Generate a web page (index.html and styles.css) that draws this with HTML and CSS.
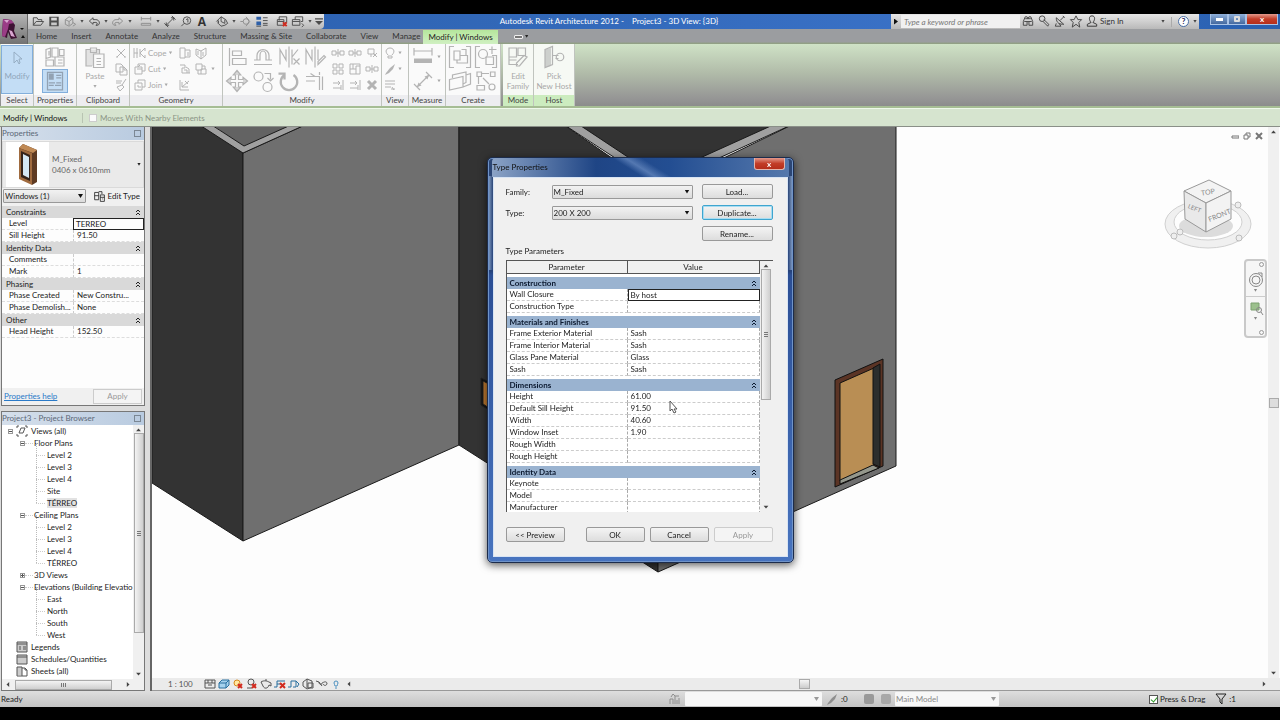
FILE: index.html
```html
<!DOCTYPE html>
<html lang="en">
<head>
<meta charset="utf-8">
<title>Autodesk Revit Architecture 2012 - Project3 - 3D View: {3D}</title>
<link rel="stylesheet" href="styles.css">
</head>
<body>
<svg class="defs" aria-hidden="true">
  <symbol id="open" viewBox="0 0 16 16"><path d="M3 12V4h4l1 2h4v2M3 12l3-4h8l-3 4z"/></symbol>
  <symbol id="save" viewBox="0 0 16 16"><path class="f" fill-rule="evenodd" d="M3 3h10v10H3zM5 4v3h6V4zM5 9v3h6V9z"/></symbol>
  <symbol id="sync" viewBox="0 0 16 16"><path d="M3 6l4-3 4 2v5l-4 3-4-2zM3 6l4 2 4-3M7 8v4M11 9l3 2-3 2"/></symbol>
  <symbol id="undo" viewBox="0 0 16 16"><path d="M7 4L3 7.500l4 3.500V9h3c2 0 2 3 0 3h2c3-1 2-6-2-6H7z"/></symbol>
  <symbol id="redo" viewBox="0 0 16 16"><path d="M9 4l4 3.500L9 11V9H6c-2 0-2 3 0 3H4C1 11 2 6 6 6h3z"/></symbol>
  <symbol id="ruler" viewBox="0 0 16 16"><path d="M3 3v4M13 3v4M3 5h10M3 10h10v2H3z"/></symbol>
  <symbol id="dim" viewBox="0 0 16 16"><path d="M4 12l8-8M2 10l4 4M10 2l4 4M9 4h3v3M4 9v3h3"/></symbol>
  <symbol id="tag" viewBox="0 0 16 16"><circle cx="9" cy="7" r="4"/><path d="M6 10l-3 3M8 6l2-1v4"/></symbol>
  <symbol id="house" viewBox="0 0 16 16"><path d="M2 8l5-5 5 3 2 4-3 2-4 1-3-3V7M7 3v5l4 2V6M4 10V7"/></symbol>
  <symbol id="section" viewBox="0 0 16 16"><circle cx="8" cy="8" r="3"/><path d="M8 3l4 5-4 5M2 8h3"/></symbol>
  <symbol id="lines" viewBox="0 0 16 16"><path class="blue" d="M2 3h5v3H2zM2 8h5v4H2z"/><path d="M9 4h5M9 7h5M9 10h5M9 12h5M2 13h5"/></symbol>
  <symbol id="closehid" viewBox="0 0 16 16"><path d="M5 7V3h8v6h-2M3 6h7v6H3zM3 8h7"/><path class="red" d="M9 9l4 4M13 9l-4 4"/></symbol>
  <symbol id="switch" viewBox="0 0 16 16"><path d="M5 6V3h8v5h-2M2 6h8v6H2zM2 8h8M12 10l2 2-2 2"/></symbol>
  <symbol id="arrow" viewBox="0 0 16 16"><path d="M5 2v11l3-3 2 4 1-1-1-4h3z"/></symbol>
  <symbol id="props" viewBox="0 0 16 16"><path d="M2 3l3-1v6l-3 1zM6 2h4v6H6zM8 8h6v6H8zM2 10h5v4H2zM11 3h3v4h-3zM10 10h3M10 12h3M4 4v3"/></symbol>
  <symbol id="palette" viewBox="0 0 16 16"><path d="M2 1h12v14H2z"/><path class="f" d="M3 2h4v5H3zM9 3h4v1H9zM9 5h4v1H9zM3 9h5v1H3zM9 9h4v1H9zM3 11h4v1H3zM8 11h5v1H8z"/></symbol>
  <symbol id="paste" viewBox="0 0 16 16"><path d="M5 3H2v11h4M11 6V3H9M5 2h4v3H5zM7 6h7v9H7zM9 9h3M9 11h3M9 13h3"/><path class="f" opacity=".35" d="M2 3h9v3H7v8H2z"/></symbol>
  <symbol id="x" viewBox="0 0 16 16"><path d="M4 4l8 8M12 4l-8 8M3 12h2M11 12h2"/></symbol>
  <symbol id="copy" viewBox="0 0 16 16"><path d="M3 3h5l2 2v6H3zM7 6h4l3 3v5H7zM11 6v3h3"/></symbol>
  <symbol id="brush" viewBox="0 0 16 16"><path d="M13 2L9 8M3 4h6M3 6h5M4 10l5-2 2 2-4 4z"/></symbol>
  <symbol id="cope" viewBox="0 0 16 16"><path d="M2 3v10M5 3v10M2 8h4M13 3l-5 5 5 5M13 3v3M13 10v3M8 4v8"/></symbol>
  <symbol id="cut" viewBox="0 0 16 16"><path d="M6 6V3h7v7h-3M3 6h7v7H3zM5 8h5M6 6l2-2"/></symbol>
  <symbol id="join" viewBox="0 0 16 16"><path d="M6 6V3h7v7h-3v3H3V6zM6 6h4v4M6 8v2h3"/></symbol>
  <symbol id="wall" viewBox="0 0 16 16"><path d="M3 3h5v10H3zM8 5h5v7H8M10 8h2M10 10h2"/></symbol>
  <symbol id="cube" viewBox="0 0 16 16"><path d="M3 4l5 2 5-3v7l-5 4-5-4zM8 6v8M10 7v4M5 6v4"/></symbol>
  <symbol id="beam" viewBox="0 0 16 16"><path d="M3 4h5v3H5v5h8M9 6l3 2v4M7 9h3v3"/></symbol>
  <symbol id="split" viewBox="0 0 16 16"><path d="M3 3h6v6H3zM8 8h5v5H8zM5 9v4h3M9 5h3v3"/></symbol>
  <symbol id="demolish" viewBox="0 0 16 16"><path d="M3 3v10h9M5 10l7-6M5 5v5h6M8 4l3 3"/></symbol>
  <symbol id="align" viewBox="0 0 16 16"><path d="M3 2v12M5 4h6v3H5zM5 9h9v4H5z"/></symbol>
  <symbol id="offset" viewBox="0 0 16 16"><path d="M2 10h4V7a2 3 0 1 1 4 0v3h4M2 13h12M4 10V7a4 4 0 0 1 8 0v3"/></symbol>
  <symbol id="mirror" viewBox="0 0 16 16"><path d="M8 1v14M2 13V3l4 7V3M10 3v10M10 8l4-5M11 9l4 4M11 13l4-4"/></symbol>
  <symbol id="mirror2" viewBox="0 0 16 16"><path d="M8 1v14M2 13V3l4 7V3M10 3v7M10 13l5-5-1-1-4 4z"/></symbol>
  <symbol id="move" viewBox="0 0 16 16"><path d="M8 1l2.500 3H9v3h3V5.500L15 8l-3 2.500V9H9v3h1.500L8 15l-2.500-3H7V9H4v1.500L1 8l3-2.500V7h3V4H5.500z"/><path class="f" opacity=".5" d="M8 1l2.500 3h-5zM15 8l-3 2.500v-5zM8 15l-2.500-3h5zM1 8l3-2.500v5z"/></symbol>
  <symbol id="copies" viewBox="0 0 16 16"><circle cx="5" cy="5" r="3"/><circle cx="11" cy="12" r="3"/><path d="M9 3h4v4M11 6l2 2 2-2"/></symbol>
  <symbol id="rotate" viewBox="0 0 16 16"><path stroke-width="1.500" d="M5 4a5.500 5.500 0 1 0 6 0M5 7V3H1"/></symbol>
  <symbol id="trim" viewBox="0 0 16 16"><path d="M2 5h9v9M2 8h6M11 2v2M13 5v9M5 3l3 2"/></symbol>
  <symbol id="splitel" viewBox="0 0 16 16"><path d="M2 6h4v4H2zM10 6h4v4h-4zM8 4v8M6 8h4"/></symbol>
  <symbol id="pin" viewBox="0 0 16 16"><path d="M4 4h6v5H4zM7 9v3M9 8l4 4M13 8l-4 4"/></symbol>
  <symbol id="array" viewBox="0 0 16 16"><path d="M3 3h4v4H3zM9 3h4v4H9zM3 9h4v4H3zM9 9h4v4H9z"/></symbol>
  <symbol id="scale" viewBox="0 0 16 16"><path d="M3 3h10v10H3zM3 8h6v5M6 3v5M9 8V5h4"/></symbol>
  <symbol id="extend" viewBox="0 0 16 16"><path d="M13 3v10M3 6h7M8 4l2 2-2 2M3 11h8M11 8v5"/></symbol>
  <symbol id="del" viewBox="0 0 16 16"><path stroke-width="3" d="M4 4l8 8M12 4l-8 8"/></symbol>
  <symbol id="bulb" viewBox="0 0 16 16"><path d="M6 11h4v2H6zM6 10C2 6 5 3 8 3s6 3 2 7"/></symbol>
  <symbol id="paint" viewBox="0 0 16 16"><path class="f" d="M13 3l-5 4-4 5-1 2 4-2 4-4z"/></symbol>
  <symbol id="weights" viewBox="0 0 16 16"><path d="M3 4h10M3 7h10M3 10h6M9 12h4M10 10l2 3"/></symbol>
  <symbol id="measure" viewBox="0 0 16 16"><path d="M2 2v5M14 2v5M2 4h12"/><path class="f" d="M2 9h12v3H2z"/></symbol>
  <symbol id="aligned" viewBox="0 0 16 16"><path d="M4 12l8-8M2 10l4 4M10 2l4 4"/><path class="f" d="M12 4l-1 3-2-2zM4 12l1-3 2 2z"/></symbol>
  <symbol id="group" viewBox="0 0 16 16"><path d="M4 1H1v14h3M12 1h3v14h-3M4 4h4v6H4zM8 7h5v5H6v-2M9 3h3v4"/></symbol>
  <symbol id="similar" viewBox="0 0 16 16"><path d="M4 1H1v14h3M12 7h3v8h-3M8 8h5v5H8zM12 1v5M10 3h5"/><circle cx="6" cy="6" r="3"/></symbol>
  <symbol id="assembly" viewBox="0 0 16 16"><path d="M1 7l9-2v7l-9 2zM3 6V4l9-2v7l-2 1M12 4l3-1v7l-5 2"/></symbol>
  <symbol id="parts" viewBox="0 0 16 16"><path d="M2 2h3v3H2zM11 2h3v3h-3zM2 11h5v3H2zM5 3h5M3 5v5M6 6l4 4"/><circle cx="12" cy="12" r="2"/></symbol>
  <symbol id="edit" viewBox="0 0 16 16"><path d="M2 2h5v6H2zM8 2h5v5H8zM2 10h5M2 8v5h6M14 8l-5 6H7v-2l5-5z"/></symbol>
  <symbol id="host" viewBox="0 0 16 16"><path d="M2 3l5-2v12l-5 2zM7 7h4M9 9h2"/><path class="f" opacity=".6" d="M2 3l4-1v12l-4 1z"/><circle cx="12" cy="8" r="2.500"/></symbol>
  <symbol id="binoc" viewBox="0 0 16 16"><path d="M3 12V8l2-5h2l1 2 1-2h2l2 5v4h-4V8H7v4zM4 8h3M9 8h3M5 5h6"/></symbol>
  <symbol id="key" viewBox="0 0 16 16"><circle cx="6" cy="5" r="3"/><path d="M7 8l5 5 1-2-5-5"/></symbol>
  <symbol id="dish" viewBox="0 0 16 16"><path d="M4 4c0 6 4 7 8 7zM8 7l4-4M4 10l-1 3h6l-2-3M11 2l2 2"/></symbol>
  <symbol id="star" viewBox="0 0 16 16"><path d="M8 2l2 4h4l-3 3 1 5-4-3-4 3 1-5-3-3h4z"/></symbol>
  <symbol id="user" viewBox="0 0 16 16"><path d="M8 2c4 0 3 5 1 7l4 2v2H3v-2l4-2C5 7 4 2 8 2z"/></symbol>
  <symbol id="chev" viewBox="0 0 8 8"><path d="M2 4l2-2 2 2M2 7l2-2 2 2"/></symbol>
  <symbol id="filter" viewBox="0 0 16 16"><path d="M3 3h10L9 8v5l-2-2V8z"/></symbol>
</svg>

<div class="app">
<header class="top">
  <button class="logo" aria-label="Application menu">
    <svg viewBox="0 0 27 27"><path fill="#3e1233" d="M3 3l8 1 4 5-1 6 3 7-6 1-3-7-1 6-5-2z"/><path fill="#9a3c86" d="M3 3l8 1 3 3-5 1-1 5-3 8-3-1z"/><path fill="#d9a6d0" d="M4 4l5 0-2 3zM9 14l3 1 3 6-4-1z"/><path fill="#111" d="M20 12h4l-2 2zM21 22l2-3 2 3z"/></svg>
  </button>
  <div class="titlebar">
    <div class="qat">
      <button aria-label="Open"><svg><use href="#open"/></svg></button>
      <button aria-label="Save"><svg><use href="#save"/></svg></button>
      <button class="dim" aria-label="Synchronize"><svg><use href="#sync"/></svg></button><i class="dd"></i>
      <button aria-label="Undo"><svg><use href="#undo"/></svg></button><i class="dd"></i>
      <button class="dim" aria-label="Redo"><svg><use href="#redo"/></svg></button><i class="dd"></i>
      <b class="gap"></b>
      <button class="dim" aria-label="Measure"><svg><use href="#ruler"/></svg></button><i class="dd"></i>
      <button aria-label="Dimension"><svg><use href="#dim"/></svg></button>
      <button aria-label="Tag"><svg><use href="#tag"/></svg></button>
      <button class="letter">A</button>
      <b class="gap"></b>
      <button aria-label="3D view"><svg><use href="#house"/></svg></button><i class="dd"></i>
      <button class="dim" aria-label="Section"><svg><use href="#section"/></svg></button>
      <button aria-label="Thin lines"><svg><use href="#lines"/></svg></button>
      <b class="gap"></b>
      <button aria-label="Close hidden windows"><svg><use href="#closehid"/></svg></button>
      <button aria-label="Switch windows"><svg><use href="#switch"/></svg></button><i class="dd"></i>
      <i class="dd big"></i>
    </div>
    <div class="title"><span>Autodesk Revit Architecture 2012 -</span><span>Project3 - 3D View: {3D}</span></div>
    <div class="info">
      <i class="play"></i>
      <input type="text" placeholder="Type a keyword or phrase" aria-label="Search">
      <button aria-label="Search"><svg><use href="#binoc"/></svg></button>
      <button aria-label="Subscription"><svg><use href="#key"/></svg></button>
      <button aria-label="Communication"><svg><use href="#dish"/></svg></button>
      <button aria-label="Favorites"><svg><use href="#star"/></svg></button>
      <button class="sign"><svg><use href="#user"/></svg>Sign In</button>
      <i class="dd push"></i><b class="rule"></b>
      <button class="help" aria-label="Help">?</button><i class="dd"></i>
    </div>
    <div class="winbtns">
      <button aria-label="Minimize"><i class="min"></i></button><button aria-label="Restore"><i class="max"></i></button><button class="close">x</button>
    </div>
  </div>
  <nav class="tabs">
    <button>Home</button><button>Insert</button><button>Annotate</button><button>Analyze</button><button>Structure</button><button>Massing &amp; Site</button><button>Collaborate</button><button>View</button><button>Manage</button><button class="active">Modify | Windows</button>
    <button class="mini" aria-label="Minimize ribbon"><i></i></button><i class="dd"></i>
  </nav>
</header>

<div class="ribbon">
  <section class="p-select"><div><button class="tall on"><svg><use href="#arrow"/></svg>Modify</button></div><h2>Select</h2></section>
  <section class="p-props"><div class="stack"><button aria-label="Type properties"><svg class="l"><use href="#props"/></svg></button><button class="on" aria-label="Properties"><svg class="m"><use href="#palette"/></svg></button></div><h2>Properties</h2></section>
  <section class="p-clip"><div><button class="tall"><svg class="l"><use href="#paste"/></svg>Paste<i class="dd"></i></button><span class="col"><button aria-label="Cut"><svg><use href="#x"/></svg></button><button aria-label="Copy"><svg><use href="#copy"/></svg></button><button aria-label="Match"><svg><use href="#brush"/></svg></button></span></div><h2>Clipboard</h2></section>
  <section class="p-geo"><div><span class="col wide"><button><svg><use href="#cope"/></svg>Cope<i class="dd"></i></button><button><svg><use href="#cut"/></svg>Cut<i class="dd"></i></button><button><svg><use href="#join"/></svg>Join<i class="dd"></i></button></span><span class="col"><button aria-label="Wall joins"><svg><use href="#wall"/></svg></button><button aria-label="Beam joins"><svg><use href="#beam"/></svg></button><button aria-label="Demolish"><svg><use href="#demolish"/></svg></button></span><span class="col"><button aria-label="Split face"><svg><use href="#cube"/></svg></button><button aria-label="Paint"><svg><use href="#split"/></svg><i class="dd"></i></button></span></div><h2>Geometry</h2></section>
  <section class="p-mod"><div>
    <span class="big"><button aria-label="Align"><svg class="l"><use href="#align"/></svg></button><button aria-label="Offset"><svg class="l"><use href="#offset"/></svg></button><button aria-label="Mirror axis"><svg class="l"><use href="#mirror"/></svg></button><button aria-label="Mirror draw"><svg class="l"><use href="#mirror2"/></svg></button><button aria-label="Move"><svg class="l"><use href="#move"/></svg></button><button aria-label="Copy"><svg class="l"><use href="#copies"/></svg></button><button aria-label="Rotate"><svg class="l"><use href="#rotate"/></svg></button><button aria-label="Trim"><svg class="l"><use href="#trim"/></svg></button></span>
    <span class="small"><button aria-label="Split"><svg><use href="#splitel"/></svg></button><button aria-label="Split gap"><svg><use href="#splitel"/></svg></button><button aria-label="Unpin"><svg><use href="#pin"/></svg></button><button aria-label="Array"><svg><use href="#array"/></svg></button><button aria-label="Scale"><svg><use href="#scale"/></svg></button><button aria-label="Pin"><svg><use href="#splitel"/></svg></button><button aria-label="Trim one"><svg><use href="#extend"/></svg></button><button aria-label="Trim many"><svg><use href="#extend"/></svg></button><button aria-label="Delete"><svg><use href="#del"/></svg></button></span></div><h2>Modify</h2></section>
  <section class="p-view"><div><span class="col"><button aria-label="Hide"><svg><use href="#bulb"/></svg><i class="dd"></i></button><button aria-label="Override"><svg><use href="#paint"/></svg><i class="dd"></i></button><button aria-label="Linework"><svg><use href="#weights"/></svg></button></span></div><h2>View</h2></section>
  <section class="p-meas"><div class="stack"><button aria-label="Measure"><svg class="l"><use href="#measure"/></svg><i class="dd"></i></button><button aria-label="Aligned dimension"><svg class="l"><use href="#aligned"/></svg><i class="dd"></i></button></div><h2>Measure</h2></section>
  <section class="p-create"><div><span class="big"><button aria-label="Create assembly"><svg class="l"><use href="#group"/></svg></button><button aria-label="Create parts"><svg class="l"><use href="#similar"/></svg></button><button aria-label="Create group"><svg class="l"><use href="#assembly"/></svg></button><button aria-label="Create similar"><svg class="l"><use href="#parts"/></svg></button></span></div><h2>Create</h2></section>
  <section class="p-mode green"><div><button class="tall"><svg class="l"><use href="#edit"/></svg>Edit<br>Family</button></div><h2>Mode</h2></section>
  <section class="p-host green"><div><button class="tall"><svg class="l"><use href="#host"/></svg>Pick<br>New Host</button></div><h2>Host</h2></section>
</div>

<div class="options"><strong>Modify | Windows</strong><label><input type="checkbox" disabled>Moves With Nearby Elements</label></div>

<main class="work">
  <aside class="side">
    <section class="palette">
      <h2 class="bar">Properties<button aria-label="Close properties"></button></h2>
      <div class="type">
        <svg viewBox="0 0 43 45"><path fill="#fff" d="M0 0h43v45H0z"/><path fill="#5e3a22" d="M13 6l4-4 14 6v32l-5 3z"/><path fill="#c08a55" d="M13 6l4-4 14 6-4 3z"/><path fill="#a06b3f" d="M13 6l13 5v32l-13-6z"/><path fill="#35231a" d="M15 9l9 4v26l-9-4z"/><path fill="#d5e8f5" d="M17 12l6 3v21l-6-3z"/></svg>
        <p>M_Fixed<br>0406 x 0610mm</p><i class="dd"></i>
      </div>
      <div class="filterrow"><span class="select"><select aria-label="Category"><option>Windows (1)</option></select></span><button><svg viewBox="0 0 16 16"><path d="M2 3h5v9H2zM2 7h5M7 2h4v3M9 6h5v8H9zM9 9h5M11 11h1"/></svg>Edit Type</button></div>
      <table class="grid">
        <tr><th colspan="2">Constraints<svg class="c"><use href="#chev"/></svg></th></tr>
        <tr><td>Level</td><td class="sel">TERREO</td></tr>
        <tr><td>Sill Height</td><td>91.50</td></tr>
        <tr><th colspan="2">Identity Data<svg class="c"><use href="#chev"/></svg></th></tr>
        <tr><td>Comments</td><td></td></tr>
        <tr><td>Mark</td><td>1</td></tr>
        <tr><th colspan="2">Phasing<svg class="c"><use href="#chev"/></svg></th></tr>
        <tr><td>Phase Created</td><td>New Constru...</td></tr>
        <tr><td>Phase Demolish...</td><td>None</td></tr>
        <tr><th colspan="2">Other<svg class="c"><use href="#chev"/></svg></th></tr>
        <tr><td>Head Height</td><td>152.50</td></tr>
      </table>
      <footer><a href="#help">Properties help</a><button disabled>Apply</button></footer>
    </section>
    <section class="browser">
      <h2 class="bar">Project3 - Project Browser<button aria-label="Close browser"></button></h2>
      <div class="treewrap">
        <ul class="tree">
          <li><i class="box"></i><svg class="ti" viewBox="0 0 12 12"><path d="M1 3V1h2M9 1h2v2M1 9v2h2M9 11h2V9M5 3h4l-2 5H3z"/></svg>Views (all)
            <ul>
              <li><i class="box"></i>Floor Plans<ul><li>Level 2</li><li>Level 3</li><li>Level 4</li><li>Site</li><li><mark>TÉRREO</mark></li></ul></li>
              <li><i class="box"></i>Ceiling Plans<ul><li>Level 2</li><li>Level 3</li><li>Level 4</li><li>TÉRREO</li></ul></li>
              <li><i class="box plus"></i>3D Views</li>
              <li><i class="box"></i>Elevations (Building Elevatio<ul><li>East</li><li>North</li><li>South</li><li>West</li></ul></li>
            </ul>
          </li>
          <li class="leaf"><svg class="ti" viewBox="0 0 12 12"><path class="g" d="M1 1h10v10H1z"/><path d="M1 1h10v10H1zM1 3h10M3 6h2M3 8h2M7 6h3M7 8h3"/></svg>Legends</li>
          <li class="leaf"><svg class="ti" viewBox="0 0 12 12"><path class="g" d="M1 2h10v9H1z"/><path d="M1 2h10v9H1zM1 4h10"/></svg>Schedules/Quantities</li>
          <li class="leaf"><svg class="ti" viewBox="0 0 12 12"><path class="g" d="M1 2h5v8H1z"/><path d="M1 2h5v9H1zM6 3h3l2 2v6H6M9 3v2h2"/></svg>Sheets (all)</li>
        </ul>
        <div class="vs"><i class="u"></i><b></b><i class="d"></i></div>
      </div>
      <div class="hs"><i class="lft"></i><b></b><i class="rgt"></i></div>
    </section>
  </aside>

  <section class="view">
    <div class="canvas">
      <svg class="scene" viewBox="152 127 1116 552" preserveAspectRatio="xMinYMin slice" role="img" aria-label="3D model">
        <g stroke="#1a1a1a">
          <path fill="#333" d="M152 120H195L243 153V541L152 483z"/>
          <path fill="#6f6f6f" d="M243 153L316 120H459V445L243 541z"/>
          <path fill="#636363" stroke="none" d="M205 120L244 147 304 120z"/>
          <path fill="#a0a0a0" d="M192 120L243 153 316 120H302L244 146 204 120z"/>
          <path fill="#333" d="M459 120H557L658 190V572L459 445z"/>
          <path fill="#6f6f6f" d="M658 190L802 120H896V466L658 572z"/>
          <path fill="#333" d="M572 120L658 178 784 120z"/>
          <path fill="#a0a0a0" d="M557 120L658 186 802 120H784L658 177 572 120z"/>
        </g>
        <path fill="#111" d="M481 378l8 4v28l-8-5z"/><path fill="#c07b32" d="M483 381l6 3v24l-6-4z"/>
        <path fill="#5b3425" stroke="#111" d="M835 380l48-21v107l-48 21z"/>
        <path fill="#b98e54" stroke="#111" d="M840 383l34-15v97l-34 16z"/>
        <path fill="#2c2e2d" stroke="#111" d="M873 368l7-4v103l-7-3z"/>
        <path fill="#94978c" stroke="#111" d="M840 480l33-15 6 3-39 16z"/>
      </svg>
      <div class="mdi"><svg viewBox="0 0 8 8"><path d="M1 4h7v2H1z"/></svg><svg viewBox="0 0 8 8"><path d="M3 3V1h4v4H5M1 3h4v4H1z"/></svg><svg viewBox="0 0 8 8"><path stroke-width="2" d="M1 1l6 6M7 1L1 7"/></svg></div>
      <svg class="cube" viewBox="0 0 92 76">
        <ellipse cx="45" cy="46" rx="43" ry="24" fill="#f0f0f0" stroke="#d0d0d0"/><ellipse cx="45" cy="44" rx="34" ry="18" fill="#fdfdfd" stroke="#d0d0d0"/>
        <ellipse cx="43" cy="48" rx="27" ry="11" fill="#dcdcdc"/>
        <g fill="#f3f3f3" stroke="#999"><path d="M21 13L46 2l22 11-25 12z"/><path fill="#e9e9e9" d="M21 13l22 12v29L22 41z"/><path d="M43 25l25-12v28L43 54z"/></g>
        <g fill="#888"><text x="38" y="17" transform="rotate(-10 42 14)">TOP</text><text class="left" x="25" y="33" transform="rotate(22 33 30)">LEFT</text><text x="45" y="40" transform="rotate(-22 56 38)">FRONT</text></g>
        <g fill="#eee" stroke="#bbb"><circle cx="11" cy="58" r="3"/><circle cx="17" cy="54" r="3"/><circle cx="75" cy="27" r="3"/><circle cx="76" cy="60" r="3"/></g>
      </svg>
      <div class="nav"><i class="o"></i><svg viewBox="0 0 16 16"><circle cx="8" cy="8" r="6.500"/><circle cx="8" cy="8" r="4"/><path d="M10 1h4v4"/></svg><i class="dd"></i><hr><svg viewBox="0 0 16 16"><path fill="#9cc08d" stroke="#7da070" d="M3 3h8v7H3z"/><circle cx="11" cy="10" r="2.500"/><path d="M13 12l2 3"/></svg><i class="dd"></i><i class="o end"></i></div>
    </div>
    <div class="vs main"><i class="u"></i><b></b><i class="d"></i></div>
    <div class="viewbar">
      <span class="scale">1 : 100</span>
      <svg viewBox="0 0 14 12"><path d="M2 2h10v8H2zM2 5h10M5 2v3M9 2v3M5 7h4"/></svg>
      <svg viewBox="0 0 14 12"><path fill="#a5d2ee" stroke="#286f9e" d="M2 5l3-3h7v5l-3 3H2zM2 5h7v5M9 5l3-3"/></svg>
      <svg viewBox="0 0 14 12"><circle cx="6" cy="5" r="3" fill="#ffe9a0" stroke="#d8891e"/><path class="red" d="M7 6l4 4M11 6l-4 4"/></svg>
      <svg viewBox="0 0 14 12"><circle cx="6" cy="4" r="3"/><path d="M2 10h5"/><path class="red" d="M7 6l4 4M11 6l-4 4"/></svg>
      <svg viewBox="0 0 14 12"><path d="M2 4c3-2 6-1 8 0l2 1v3l-2-1c-1 4-5 4-6 1L2 4M6 2h2"/></svg>
      <svg viewBox="0 0 14 12"><path stroke="#286f9e" d="M1 9h3V3h8M4 6h5"/><path class="red" d="M7 5l5 5M12 5l-5 5"/></svg>
      <svg viewBox="0 0 14 12"><path stroke="#286f9e" d="M1 9h3V3h5v6H6M9 3l3 3-2 3"/></svg>
      <svg viewBox="0 0 14 12"><path d="M2 4l4-3 5 2v6L6 11 2 8zM6 1v9M7 5h5v5H7z"/></svg>
      <svg viewBox="0 0 14 12"><path d="M1 3l3 1c0 3 3 3 3 1 2-1 4-2 5 0 0 3-3 3-4 1M4 4l3 4"/></svg>
      <svg viewBox="0 0 14 12"><path stroke="#4a90c0" d="M5 5a2 2 0 1 1 4 0c0 1-1 2-1 3H6c0-1-1-2-1-3zM6 10h2"/></svg>
      <div class="hs main"><i class="lft"></i><b></b><i class="rgt"></i></div>
    </div>
  </section>
</main>

<footer class="status">
  <span class="ready">Ready</span>
  <svg class="dim" viewBox="0 0 16 16"><path d="M3 13V8h3v5M8 5v8M8 5h4M10 9v4M12 7v6M4 6l2-3 2 2"/></svg>
  <span class="select w"><select aria-label="Workset"><option></option></select></span>
  <svg class="dim pencil"><use href="#paint"/></svg><span class="zero">:0</span>
  <i class="sq"></i><i class="sq two"></i>
  <span class="select m"><select aria-label="Design option"><option>Main Model</option></select></span>
  <label class="press"><input type="checkbox" checked>Press &amp; Drag</label>
  <svg><use href="#filter"/></svg><span class="one">:1</span>
</footer>
</div>

<div class="overlay">
  <div class="dialog" role="dialog" aria-labelledby="dt">
    <header><h1 id="dt">Type Properties</h1><button class="close">x</button></header>
    <div class="body">
      <div class="form">
        <label for="fam">Family:</label><span class="select"><select id="fam"><option>M_Fixed</option></select></span><button class="btn">Load...</button>
        <label for="typ">Type:</label><span class="select"><select id="typ"><option>200 X 200</option></select></span><button class="btn hot">Duplicate...</button>
        <button class="btn last">Rename...</button>
      </div>
      <h2>Type Parameters</h2>
      <div class="params">
        <div class="clip"><table>
          <thead><tr><th>Parameter</th><th>Value</th></tr></thead>
          <tbody><tr><th colspan="2">Construction<svg class="c"><use href="#chev"/></svg></th></tr><tr><td>Wall Closure</td><td class="sel">By host</td></tr><tr><td>Construction Type</td><td></td></tr></tbody>
          <tbody><tr><th colspan="2">Materials and Finishes<svg class="c"><use href="#chev"/></svg></th></tr><tr><td>Frame Exterior Material</td><td>Sash</td></tr><tr><td>Frame Interior Material</td><td>Sash</td></tr><tr><td>Glass Pane Material</td><td>Glass</td></tr><tr><td>Sash</td><td>Sash</td></tr></tbody>
          <tbody><tr><th colspan="2">Dimensions<svg class="c"><use href="#chev"/></svg></th></tr><tr><td>Height</td><td>61.00</td></tr><tr><td>Default Sill Height</td><td>91.50</td></tr><tr><td>Width</td><td>40.60</td></tr><tr><td>Window Inset</td><td>1.90</td></tr><tr><td>Rough Width</td><td></td></tr><tr><td>Rough Height</td><td></td></tr></tbody>
          <tbody><tr><th colspan="2">Identity Data<svg class="c"><use href="#chev"/></svg></th></tr><tr><td>Keynote</td><td></td></tr><tr><td>Model</td><td></td></tr><tr><td>Manufacturer</td><td></td></tr></tbody>
        </table></div>
        <div class="vs"><i class="u"></i><b></b><i class="d"></i></div>
      </div>
      <div class="actions"><button class="btn">&lt;&lt; Preview</button><button class="btn ok">OK</button><button class="btn">Cancel</button><button class="btn" disabled>Apply</button></div>
    </div>
    <svg class="pointer" viewBox="0 0 10 14"><path fill="#fff" stroke="#555" d="M1 1v10l2-2 2 4 2-1-2-3h3z"/></svg>
  </div>
</div>
</body>
</html>
```
FILE: styles.css
```css
* { box-sizing: border-box; }
html, body { height: 100%; }
body { margin: 0; padding: 14px 0 13px; background: #000; font: 8px/12px Lato, "Open Sans", sans-serif; color: #222; overflow: hidden; }
button, input, select { font: inherit; color: inherit; margin: 0; padding: 0; border: 0; background: none; }
h1, h2, p, ul { margin: 0; padding: 0; font: inherit; list-style: none; }
svg { width: 16px; height: 16px; fill: none; stroke: currentColor; flex: none; display: block; }
.defs { position: absolute; width: 0; height: 0; }
.f { fill: currentColor; stroke: none; }
.red { stroke: #d22a1e; stroke-width: 2; }
.blue { fill: #2d5fa8; stroke: none; }
svg.c { width: 8px; height: 8px; }

.app { height: 100%; display: flex; flex-direction: column; background: #ececec; }
.dd { flex: none; width: 8px; height: 5px; display: block; background: currentColor; clip-path: polygon(30% 20%, 70% 20%, 50% 75%); }
.dd.big { width: 10px; height: 8px; clip-path: polygon(10% 10%, 90% 10%, 90% 25%, 10% 25%, 10% 45%, 90% 45%, 50% 95%, 10% 45%); }

/* title bar and tabs */
.top { display: grid; grid-template-columns: 28px 1fr; grid-template-rows: 15px 15px; background: linear-gradient(#9b9da0 92%, #8ea07e); }
.logo { grid-row: 1 / 3; background: linear-gradient(#b5b5b5, #727272); border-right: 1px solid #666; }
.logo svg { width: 27px; height: 27px; stroke: none; }
.titlebar { display: flex; background: linear-gradient(90deg, #2a5fae, #3268b8 40%, #3a72c8 75%, #285fae); }
.qat, .info { display: flex; align-items: center; background: linear-gradient(#e6e6e6, #b9b9b9); }
.qat { padding-left: 2px; color: #4c4c4c; border-radius: 0 0 4px 0; }
.qat button svg, .info button svg { height: 15px; }
.qat .letter { width: 16px; font: bold 12px/14px "Open Sans", sans-serif; color: #333; }
.qat .gap { width: 4px; }
.dim, .qat .dim { color: #8e8e8e; }
.title { flex: 1; display: flex; justify-content: center; gap: 8px; padding-left: 3px; color: #fff; line-height: 15px; }
.info { width: 308px; color: #444; }
.play { width: 10px; height: 6px; background: #111; clip-path: polygon(30% 0, 70% 50%, 30% 100%); }
.info input { width: 119px; height: 13px; background: #f1f1f1; padding-left: 3px; font-style: italic; }
.info input::placeholder { color: #777; opacity: 1; }
.sign { display: flex; align-items: center; line-height: 15px; color: #333; }
.info .push { margin-left: auto; }
.rule { width: 1px; height: 10px; background: #aaa; margin: 0 4px; }
.info .help { width: 11px; height: 11px; margin: 0 2px; border: 1px solid #4a6fa5; border-radius: 50%; background: #fff; color: #225; font-weight: bold; line-height: 9px; }
.winbtns { display: flex; align-items: flex-start; width: 81px; padding: 0 2px 0 11px; }
.winbtns button { width: 18px; height: 11px; display: flex; align-items: center; justify-content: center; border: 1px solid #a9c3e6; border-top: 0; background: linear-gradient(#8fb0da, #44699f); }
.winbtns .close { width: 32px; }
.winbtns .close, .dialog .close { background: linear-gradient(#e39a8c, #c23d28 50%, #b52e1b); color: #fff; font-weight: bold; line-height: 8px; }
.min { width: 7px; height: 3px; background: #fff; }
.max { width: 6px; height: 6px; border: 2px solid #ddd; border-radius: 1px; }
.tabs { display: flex; align-items: center; padding-left: 1px; }
.tabs button { padding: 0 7px; line-height: 15px; color: #333; }
.tabs .active { background: linear-gradient(#b5e69c, #d0f0c2); padding: 0 5px; margin-left: -4px; color: #222; height: 14px; align-self: end; line-height: 13px; }
.tabs .mini { padding: 0 0 0 16px; }
.mini i { display: block; width: 9px; height: 4px; border: 1px solid #eee; background: #777; border-radius: 1px; }

/* ribbon */
.ribbon { display: flex; height: 64px; border-bottom: 2px solid #a6bd94; background: linear-gradient(#cfe2c6, #b2bdaa 45%, #949494 90%, #8c8c8c); padding-left: 1px; }
.ribbon section { display: flex; flex-direction: column; background: #fafafa; border-right: 1px solid #c0c4be; color: #a8a8a8; }
.ribbon section > div { flex: 1; display: flex; align-items: flex-start; padding-top: 1px; }
.ribbon svg { opacity: .85; }
.ribbon h2 { height: 11px; line-height: 11px; background: #ededf0; color: #444; text-align: center; white-space: nowrap; }
.ribbon .green { background: #f6f9f4; }
.ribbon .green h2 { background: #ccecbf; }
.ribbon svg.l { width: 24px; height: 24px; stroke-width: .8px; }
.ribbon svg.m { width: 20px; height: 20px; }
.ribbon button { display: flex; align-items: center; }
.ribbon .tall { flex: 1; flex-direction: column; text-align: center; line-height: 10px; }
.ribbon .on { background: #c3ddf5; border: 1px solid #82aedb; }
.p-select .tall { height: 49px; padding-top: 4px; gap: 5px; color: #8fa5bb; }
.ribbon .stack { flex-direction: column; align-items: center !important; }
.ribbon .stack button { height: 24px; }
.ribbon .stack .on { padding: 0 2px; color: #8a98a8; }
.col { display: flex; flex-direction: column; }
.col button { height: 16px; }
.big { display: grid; grid-template-columns: repeat(auto-fill, 26px); flex: 1; padding-left: 2px; }
.big button { height: 24px; }
.small { display: grid; grid-template-columns: repeat(3, 17px); }
.p-select { width: 33px; } .p-props { width: 43px; } .p-clip { width: 53px; } .p-geo { width: 93px; } .p-mod { width: 159px; }
.p-view { width: 27px; } .p-meas { width: 37px; } .p-create { width: 55px; } .p-mode { width: 31px; margin-left: 2px; } .p-host { width: 41px; }
.p-geo .wide { width: 47px; padding-left: 2px; }
.p-clip .tall svg, .p-mode svg, .p-host svg { margin-bottom: 2px; }
.p-clip .tall .dd { margin-top: 3px; }
.p-view .dd { margin-left: -2px; }

.options { height: 19px; display: flex; align-items: center; background: #d6e4cf; border-top: 1px solid #eef8ea; border-bottom: 1px solid #8a8f88; padding-left: 3px; line-height: 16px; }
.options strong { font-weight: normal; width: 80px; border-right: 1px solid #b8c4b2; line-height: 10px; color: #111; }
.options label { display: flex; align-items: center; gap: 3px; padding-left: 6px; color: #8b9486; }
.options input { appearance: none; width: 8px; height: 8px; background: #fbfbfb; border: 1px solid #ccc; }

/* palettes */
.work { flex: 1; display: flex; min-height: 0; }
.side { width: 152px; padding: 0 5px 0 1px; background: #ddd; border-right: 2px solid #666; display: flex; flex-direction: column; gap: 5px; }
.palette, .browser { border: 1px solid #777; background: #f0f0f0; display: flex; flex-direction: column; }
.palette { height: 279px; border-top: 0; }
.browser { flex: 1; min-height: 0; }
.bar { display: flex; justify-content: space-between; align-items: center; height: 13px; line-height: 11px; flex: none; background: linear-gradient(90deg, #d5dfeb, #b9cbe0); color: #5c6877; padding: 0 3px 0 0; }
.bar button { width: 7px; height: 7px; border: 1px solid #7b8794; }
.type { display: flex; align-items: center; height: 48px; margin: 1px 0; padding-left: 3px; gap: 3px; background: #eaeaea; border: 1px solid #dadada; color: #666; }
.type svg { width: 43px; height: 45px; stroke: none; }
.type p { flex: 1; line-height: 11px; white-space: nowrap; }
.type .dd { color: #222; }
.filterrow { display: flex; justify-content: space-between; padding: 0 4px 2px 1px; }
.filterrow .select { width: 83px; }
.filterrow button { display: flex; align-items: center; height: 14px; }
.filterrow button svg { width: 13px; height: 13px; margin-right: 2px; }
.select { position: relative; display: block; }
.select select { appearance: none; width: 100%; height: 14px; line-height: 12px; padding: 0 1px; border: 1px solid #999; background: linear-gradient(#f2f2f2, #dcdcdc); border-radius: 1px; display: block; }
.select::after { content: ""; position: absolute; right: 3px; top: 5px; width: 5px; height: 4px; background: #111; clip-path: polygon(0 0, 100% 0, 50% 100%); }
table { border-collapse: separate; border-spacing: 0; table-layout: fixed; width: 100%; }
td, th { height: 12px; padding: 0; line-height: 11px; white-space: nowrap; overflow: hidden; font-weight: normal; text-align: left; }
.grid td { background: #fdfdfd; border-bottom: 1px dashed #ddd; padding-left: 7px; }
.grid td + td { border-left: 1px dashed #ccc; padding-left: 3px; }
.grid td.sel, .dialog td.sel { border: 1px solid #222; line-height: 10px; padding-left: 2px; }
.grid th { background: #d9d9d9; padding-left: 4px; }
th .c { float: right; margin: 1px 2px 0 0; }
.palette .grid { margin-top: 1px; }
.palette footer { margin-top: auto; border-top: 50px solid #fdfdfd; padding: 0 2px 1px; display: flex; justify-content: space-between; align-items: center; height: 70px; }
.palette footer a { color: #2a7ac8; }
.palette footer button { width: 49px; height: 15px; border: 1px solid #ccc; background: #f4f4f4; color: #999; }
.treewrap { flex: 1; display: flex; min-height: 0; background: #fff; }
.tree { flex: 1; overflow: hidden; white-space: nowrap; padding-left: 5px; background: #fff; }
.tree li { position: relative; padding-left: 24px; }
.tree li li { padding-left: 15px; margin-left: -12px; }
.tree li li li { padding-left: 28px; margin-left: -15px; }
.tree li li::before { content: ""; position: absolute; left: 6px; top: 6px; width: 8px; border-top: 1px dotted #ccc; }
.tree li li li::before { left: 17px; width: 9px; }
.tree li li li::after { content: ""; position: absolute; left: 17px; top: -6px; height: 12px; border-left: 1px dotted #bbb; }
.tree mark { background: #e2e2e2; color: inherit; }
.ti { position: absolute; left: 9px; top: 0; width: 12px; height: 12px; color: #555; }
.ti .g { fill: #ccc; stroke: none; }
.box { position: absolute; z-index: 1; left: 1px; top: 4px; width: 5px; height: 5px; border: 1px solid #999; background: linear-gradient(#555, #555) center / 3px 1px no-repeat #fff; }
.plus { background: linear-gradient(#555, #555) center / 3px 1px no-repeat, linear-gradient(#555, #555) center / 1px 3px no-repeat, #fff; }
.vs { width: 11px; flex: none; display: flex; flex-direction: column; align-items: center; background: #f0f0f0; padding: 2px 0; }
.hs { height: 11px; flex: none; display: flex; align-items: center; background: #f0f0f0; padding: 0 3px; }
.vs i, .hs i { width: 6px; height: 6px; background: #444; flex: none; }
.u { clip-path: polygon(50% 25%, 90% 70%, 10% 70%); } .d { clip-path: polygon(50% 75%, 90% 30%, 10% 30%); }
.lft { clip-path: polygon(25% 50%, 70% 10%, 70% 90%); } .rgt { clip-path: polygon(75% 50%, 30% 10%, 30% 90%); }
.vs b { width: 10px; border: 1px solid #aaa; background: repeating-linear-gradient(#777 0 1px, transparent 1px 2px) center / 4px 5px no-repeat, linear-gradient(90deg, #f3f3f3, #cfcfcf); }
.hs b { height: 10px; border: 1px solid #aaa; background: repeating-linear-gradient(90deg, #777 0 1px, transparent 1px 2px) center / 5px 4px no-repeat, linear-gradient(#f3f3f3, #cfcfcf); }
.treewrap .vs b { height: 80%; } .vs .d, .hs .rgt { margin-top: auto; }
.hs .rgt { margin: 0 10px 0 auto; }
.browser .hs b { width: 97px; margin-left: 4px; }

/* drawing area */
.view { flex: 1; min-width: 0; display: grid; grid-template-columns: 1fr 12px; grid-template-rows: 1fr 13px; background: #fdfdfd; }
.canvas { position: relative; overflow: hidden; }
.scene { position: absolute; width: 100%; height: 100%; }
.vs.main { position: relative; }
.vs.main b { height: 10px; margin-top: 263px; background: #ddd; }
.mdi { position: absolute; right: 5px; top: 5px; display: flex; gap: 4px; color: #777; }
.mdi svg { width: 8px; height: 8px; }
.cube { position: absolute; right: 13px; top: 51px; width: 92px; height: 76px; stroke: none; font-size: 7px; }
.left { font-size: 6px; }
.nav { position: absolute; right: 1px; top: 132px; width: 23px; height: 79px; border: 2px solid #c9c9c9; border-radius: 4px; background: #f6f6f6; display: flex; flex-direction: column; align-items: center; color: #888; }
.nav hr { width: 100%; margin: 3px 0; border: 0; border-top: 1px solid #ccc; }
.nav .o { align-self: end; flex: none; width: 5px; height: 5px; border: 1px solid #999; border-radius: 50%; margin: 1px 1px 5px; }
.nav .end { margin: auto 1px 1px; }
.viewbar { grid-column: 1 / 3; display: flex; align-items: center; background: #ebebeb; border-bottom: 1px solid #999; color: #555; }
.viewbar svg { width: 14px; height: 12px; }
.scale { width: 51px; padding-left: 16px; }
.hs.main { flex: 1; background: #ebebeb; padding-left: 3px; }
.hs.main b { width: 11px; margin-left: 447px; background: linear-gradient(#f5f5f5, #ccc); }

.status { height: 16px; display: flex; align-items: center; background: linear-gradient(#dedede, #c3c3c3); padding-right: 44px; line-height: 15px; }
.ready { width: 667px; padding-left: 1px; }
.status .select select { border: 0; background: #f7f7f7; color: #888; }
.status .select::after { background: #999; }
.status .w { width: 137px; margin-left: 2px; } .status .m { width: 104px; margin-left: 4px; }
.zero { width: 24px; padding-left: 1px; }
.pencil { margin-left: 2px; }
.sq { width: 10px; height: 10px; background: #999; border-radius: 2px; } .two { margin-left: 7px; background: #a8a8a8; }
.press { margin-left: auto; margin-right: 8px; display: flex; align-items: center; gap: 2px; }
.press input { appearance: none; width: 9px; height: 9px; border: 1px solid #555; background: #fff; position: relative; }
.press input::after { content: ""; position: absolute; left: 2px; top: 0; width: 3px; height: 5px; border: solid #2f9a2a; border-width: 0 1px 1px 0; transform: rotate(40deg); }

/* dialog */
.overlay { position: fixed; inset: 0; display: flex; align-items: center; justify-content: center; }
.dialog { position: relative; width: 307px; padding: 0 5px 5px; border: 1px solid #1c2c4c; border-radius: 5px; background: linear-gradient(90deg, #8ea8cc, transparent 5px calc(100% - 5px), #8ea8cc) 0 18px / 100% 94px no-repeat, linear-gradient(#2c4674, #26427a 28%, #2b4e94 29%, #4874bf); box-shadow: inset 0 0 0 1px #6f93c8, 0 2px 8px #000a; }
.dialog header { display: flex; justify-content: space-between; height: 19px; margin: 0 -1px; background: linear-gradient(32deg, transparent 46%, #6d8fc4aa 50%, transparent 55%), linear-gradient(90deg, #8ba3c6, #1f4585 35%, #234e92 60%, #5578ac); border-radius: 4px 4px 0 0; }
.dialog h1 { line-height: 18px; padding-left: 1px; color: #111; }
.dialog .close { width: 31px; height: 12px; margin-right: 4px; border: 1px solid #e2b5ac; border-top: 0; border-radius: 0 0 3px 3px; line-height: 10px; }
.body { background: #f0f0f0; padding: 6px 14px 14px 12px; border: 1px solid #d8e4f4; }
.form { display: grid; grid-template-columns: 46px 141px 1fr; row-gap: 6px; align-items: center; }
.form .btn { margin-left: 9px; }
.btn { height: 15px; border: 1px solid #999; border-radius: 2px; background: linear-gradient(#f4f4f4, #ddd); line-height: 12px; }
.hot { border-color: #3fa5cf; box-shadow: inset 0 0 0 1px #a8ddf2; }
.last { grid-column: 3; }
.btn:disabled { color: #999; border-color: #ccc; background: #f4f4f4; }
.body h2 { margin: 4px 0 3px; }
.params { display: flex; height: 252px; }
.clip { flex: 1; overflow: hidden; background: #fff; border-left: 1px solid #555; }
.dialog thead th { height: 14px; line-height: 12px; text-align: center; background: #f0f0f0; border: solid #555; border-width: 1px 1px 1px 0; }
.dialog thead th:first-child { width: 121px; }
.dialog tbody::before { content: ""; display: block; height: 3px; }
.dialog tbody th { background: #9ab3d0; padding-left: 3px; font-weight: bold; color: #0c1a30; }
.dialog td { border-bottom: 1px dashed #ccc; border-right: 1px dashed #aaa; padding-left: 3px; }
.params .vs { width: 13px; border-top: 1px solid #555; }
.params .vs b { height: 131px; }
.actions { display: flex; gap: 5px; margin-top: 15px; }
.actions .btn { width: 59px; }
.ok { margin-left: auto; }
.pointer { position: absolute; left: 181px; top: 242px; width: 10px; height: 14px; }
```
